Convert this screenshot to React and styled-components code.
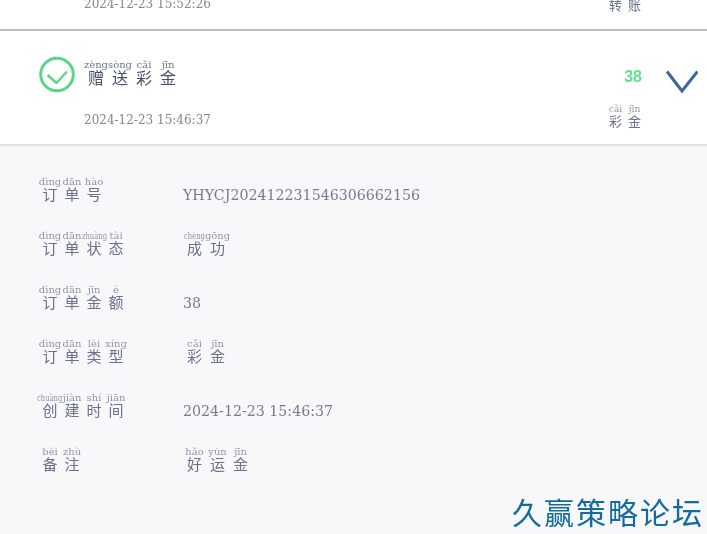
import React from 'react';
import styled, { createGlobalStyle } from 'styled-components';

const Global = createGlobalStyle`
  html, body { margin: 0; padding: 0; background: #f8f8fa; }
  body { font-family: "DejaVu Serif", "Noto Sans CJK SC", serif; }
`;
const Page = styled.div`
  position: relative; width: 707px; height: 534px; overflow: hidden; background: #f8f8fa;
  filter: blur(0.4px);
`;
const Card = styled.section`
  background: #fff; border-bottom: ${p => p.$strong ? '2px solid #bdbdbd' : '2px solid #e3e3e5'};
`;
const ClippedCard = styled(Card)`
  height: 29px; display: flex; flex-direction: column; justify-content: flex-end;
`;
const OpenCard = styled(Card)` padding-bottom: 17px; `;
const MetaRow = styled.div`
  display: flex; justify-content: space-between; align-items: flex-end;
  padding: 0 63px 0 84px;
`;
const ClippedMeta = styled(MetaRow)` margin-bottom: 18px; `;
const Date = styled.span`
  font-size: 12px; line-height: 13px; color: #83878f; white-space: nowrap;
`;
const Head = styled.div`
  display: flex; align-items: flex-start; height: 74px; box-sizing: border-box; padding: 24px 9px 0 38px;
`;
const Title = styled.div` display: flex; margin: 5px 0 0 8px; flex: 1; `;
const Amount = styled.span`
  font-family: "Liberation Sans", sans-serif; font-size: 16px; line-height: 18px; font-weight: 700; color: #62df92;
  margin: 13px 22px 0 0;
`;
const ChevronWrap = styled.span` margin-top: 14px; line-height: 0; `;
const Word = styled.div` display: inline-flex; `;
const Syl = styled.span`
  display: inline-flex; flex-direction: column; align-items: center; width: ${p => p.$w}px; white-space: nowrap;
`;
const Py = styled.span`
  font-size: ${p => p.$s}px; line-height: 9px; color: ${p => p.$c};
  transform: scaleX(${p => p.$squeeze});
`;
const Han = styled.span`
  font-family: "Noto Sans CJK SC", sans-serif; font-weight: 400;
  font-size: ${p => p.$s}px; line-height: ${p => p.$s}px; color: ${p => p.$c};
`;
const Detail = styled.div` padding: 31px 0 0 39px; `;
const DetailRow = styled.div`
  display: grid; grid-template-columns: 144px 1fr; align-items: end; height: 54px; align-content: start;
`;
const Value = styled.span`
  font-size: 14.2px; line-height: 20px; color: #757c92; white-space: nowrap; margin-bottom: -4px;
`;
const Mark = styled.div`
  position: absolute; right: 5px; bottom: 5px; display: flex; gap: 2px;
  font-family: "Noto Sans CJK SC", sans-serif; font-size: 30px; line-height: 36px; color: #146b9e;
`;

function Pinyin({ items, w = 22, pySize = 10, size = 15, pyColor = '#8f96a8', color = '#69718c' }) {
  return (
    <Word>
      {items.map(([py, h], i) => (
        <Syl key={i} $w={w}>
          <Py $s={pySize} $c={pyColor} $squeeze={py.length > 4 ? 0.68 : 1}>{py}</Py>
          <Han $s={size} $c={color}>{h}</Han>
        </Syl>
      ))}
    </Word>
  );
}

const CheckIcon = () => (
  <svg width="38" height="38" viewBox="0 0 38 38" fill="none">
    <circle cx="19" cy="19.5" r="16.3" stroke="#58d686" strokeWidth="3" />
    <path d="M9.5 20 L18.5 28 L29 16.5" stroke="#62d28c" strokeWidth="2.4" strokeLinejoin="round" />
  </svg>
);
const Chevron = () => (
  <svg width="34" height="26" viewBox="0 0 34 26" fill="none">
    <path d="M3 2.5 L18 22 L33.5 2.5" stroke="#3b689f" strokeWidth="3" />
  </svg>
);

const rows = [
  { label: [['dìng','订'],['dān','单'],['hào','号']], value: 'YHYCJ202412231546306662156' },
  { label: [['dìng','订'],['dān','单'],['zhuàng','状'],['tài','态']], pinyin: [['chéng','成'],['gōng','功']] },
  { label: [['dìng','订'],['dān','单'],['jīn','金'],['é','额']], value: '38' },
  { label: [['dìng','订'],['dān','单'],['lèi','类'],['xíng','型']], pinyin: [['cǎi','彩'],['jīn','金']] },
  { label: [['chuàng','创'],['jiàn','建'],['shí','时'],['jiān','间']], value: '2024-12-23 15:46:37' },
  { label: [['bèi','备'],['zhù','注']], pinyin: [['hǎo','好'],['yùn','运'],['jīn','金']] },
];

export default function App() {
  return (
    <Page>
      <Global />
      <ClippedCard $strong>
        <ClippedMeta>
          <Date>2024-12-23 15:52:26</Date>
          <Pinyin w={19} size={13} pySize={9} items={[['zhuǎn','转'],['zhàng','账']]} />
        </ClippedMeta>
      </ClippedCard>
      <OpenCard>
        <Head>
          <CheckIcon />
          <Title>
            <Pinyin w={24} size={16} items={[['zèng','赠'],['sòng','送'],['cǎi','彩'],['jīn','金']]} color="#454f6c" pyColor="#6e7488" />
          </Title>
          <Amount>38</Amount>
          <ChevronWrap><Chevron /></ChevronWrap>
        </Head>
        <MetaRow>
          <Date>2024-12-23 15:46:37</Date>
          <Pinyin w={19} size={13} pySize={9} items={[['cǎi','彩'],['jīn','金']]} />
        </MetaRow>
      </OpenCard>
      <Detail>
        {rows.map((r, i) => (
          <DetailRow key={i}>
            <Pinyin items={r.label} />
            {r.value ? <Value>{r.value}</Value> : <Pinyin w={23} items={r.pinyin} />}
          </DetailRow>
        ))}
      </Detail>
      <Mark><span>久</span><span>赢</span><span>策</span><span>略</span><span>论</span><span>坛</span></Mark>
    </Page>
  );
}
